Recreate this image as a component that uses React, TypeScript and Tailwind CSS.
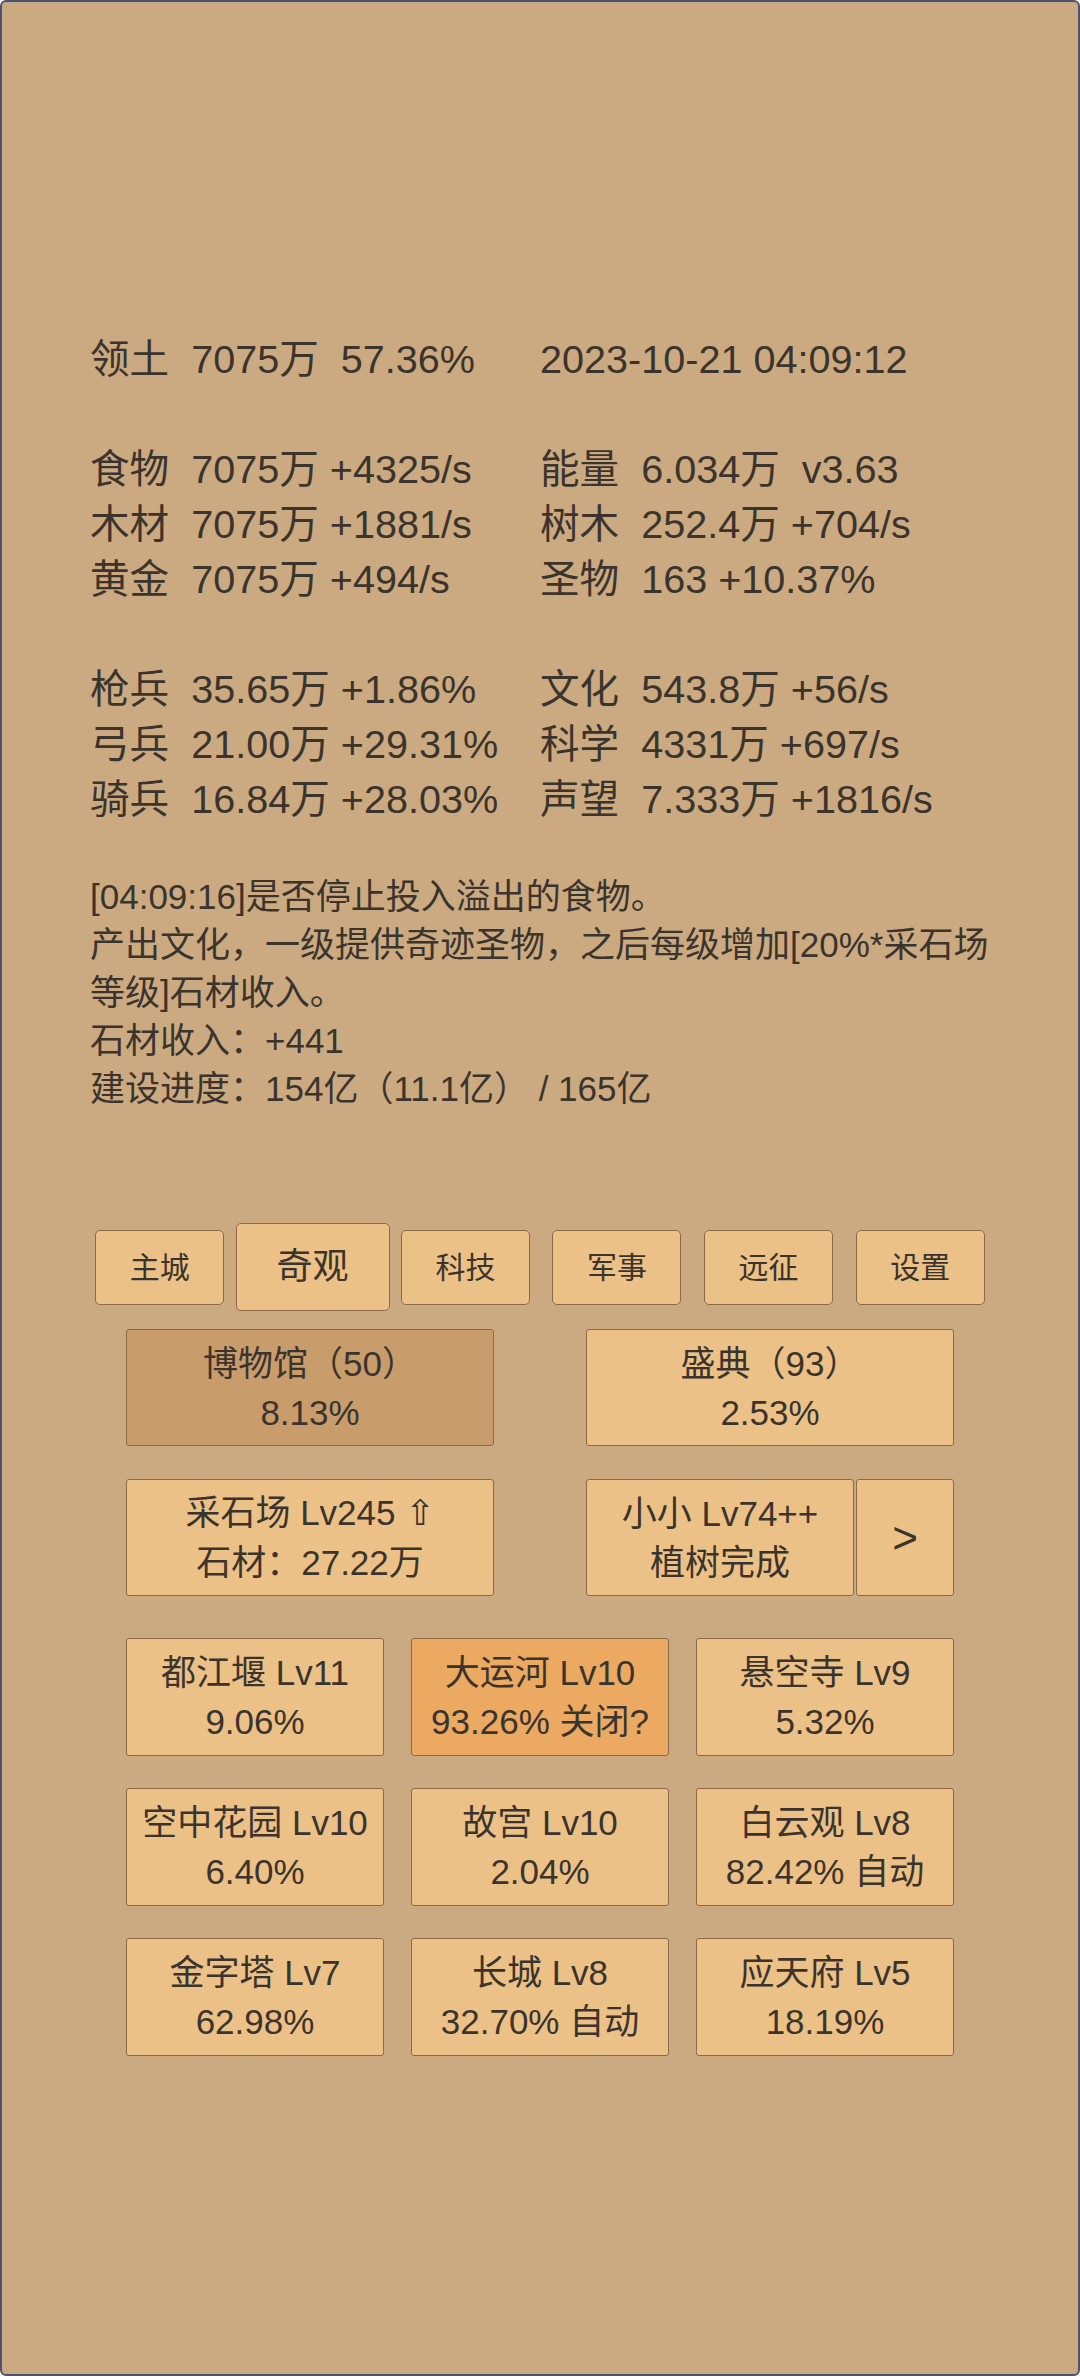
import React from 'react';

const font = { fontFamily: '"Liberation Sans", "Noto Sans CJK SC", sans-serif' };

type Row = [string, string] | null;

const stats: Row[] = [
  ['领土  7075万  57.36%', '2023-10-21 04:09:12'],
  null,
  ['食物  7075万 +4325/s', '能量  6.034万  v3.63'],
  ['木材  7075万 +1881/s', '树木  252.4万 +704/s'],
  ['黄金  7075万 +494/s', '圣物  163 +10.37%'],
  null,
  ['枪兵  35.65万 +1.86%', '文化  543.8万 +56/s'],
  ['弓兵  21.00万 +29.31%', '科学  4331万 +697/s'],
  ['骑兵  16.84万 +28.03%', '声望  7.333万 +1816/s'],
];

const tabs = ['主城', '奇观', '科技', '军事', '远征', '设置'];

const wonders: { name: string; info: string; hot?: boolean }[] = [
  { name: '都江堰 Lv11', info: '9.06%' },
  { name: '大运河 Lv10', info: '93.26% 关闭?', hot: true },
  { name: '悬空寺 Lv9', info: '5.32%' },
  { name: '空中花园 Lv10', info: '6.40%' },
  { name: '故宫 Lv10', info: '2.04%' },
  { name: '白云观 Lv8', info: '82.42% 自动' },
  { name: '金字塔 Lv7', info: '62.98%' },
  { name: '长城 Lv8', info: '32.70% 自动' },
  { name: '应天府 Lv5', info: '18.19%' },
];

const card =
  'flex flex-col items-center justify-center rounded-[3px] border border-[#8b6b47] text-[35px] leading-[49px] whitespace-pre';

export default function App() {
  return (
    <div
      className="w-[1080px] h-[2376px] bg-[#cbaa81] border-2 border-[#4c5370] rounded-[6px] text-[#3b342d] overflow-hidden"
      style={font}
    >
      {/* 资源 */}
      <div className="ml-[88px] w-[900px] pt-[330px] grid grid-cols-2 text-[39.6px] leading-[55px]">
        {stats.map((r, i) =>
          r ? (
            <React.Fragment key={i}>
              <div className="whitespace-pre">{r[0]}</div>
              <div className="whitespace-pre">{r[1]}</div>
            </React.Fragment>
          ) : (
            <div key={i} className="col-span-2 h-[55px]" />
          )
        )}
      </div>

      {/* 说明 */}
      <div className="ml-[88px] w-[915px] mt-[46px] text-[35px] leading-[48px]">
        <div>[04:09:16]是否停止投入溢出的食物。</div>
        <div>产出文化，一级提供奇迹圣物，之后每级增加[20%*采石场等级]石材收入。</div>
        <div>石材收入：+441</div>
        <div>建设进度：154亿（11.1亿） / 165亿</div>
      </div>

      {/* 标签页 */}
      <div className="mx-auto w-[912px] mt-[110px] h-[88px] flex items-center">
        {tabs.map((t) => {
          const on = t === '奇观';
          return (
            <div key={t} className="flex-1 flex justify-center">
              <button
                className={
                  on
                    ? 'w-[154px] h-[88px] text-[36px] bg-[#ecc187] border border-[#8b6b47] rounded-[5px]'
                    : 'w-[129px] h-[75px] text-[30px] bg-[#ecc187] border border-[#8b6b47] rounded-[5px]'
                }
              >
                {t}
              </button>
            </div>
          );
        })}
      </div>

      <div className="mx-auto w-[828px] mt-[18px]">
        <div className="flex justify-between">
          <div className={`${card} w-[368px] h-[117px] bg-[#c99c6c]`}>
            <div>博物馆（50）</div>
            <div>8.13%</div>
          </div>
          <div className={`${card} w-[368px] h-[117px] bg-[#ecc187]`}>
            <div>盛典（93）</div>
            <div>2.53%</div>
          </div>
        </div>

        <div className="flex justify-between mt-[33px]">
          <div className={`${card} w-[368px] h-[117px] bg-[#ecc187]`}>
            <div>
              采石场 Lv245 <span style={{ fontFamily: '"DejaVu Sans", sans-serif' }}>⇧</span>
            </div>
            <div>石材：27.22万</div>
          </div>
          <div className="flex gap-[2px]">
            <div className={`${card} w-[268px] h-[117px] bg-[#ecc187]`}>
              <div>小小 Lv74++</div>
              <div>植树完成</div>
            </div>
            <div className={`${card} w-[98px] h-[117px] bg-[#ecc187] text-[44px]`}>&gt;</div>
          </div>
        </div>

        <div className="grid grid-cols-3 gap-x-[27px] gap-y-[32px] mt-[42px]">
          {wonders.map((w) => (
            <div
              key={w.name}
              className={`${card} h-[118px] ${w.hot ? 'bg-[#eca962]' : 'bg-[#ecc187]'}`}
            >
              <div>{w.name}</div>
              <div>{w.info}</div>
            </div>
          ))}
        </div>
      </div>
    </div>
  );
}
